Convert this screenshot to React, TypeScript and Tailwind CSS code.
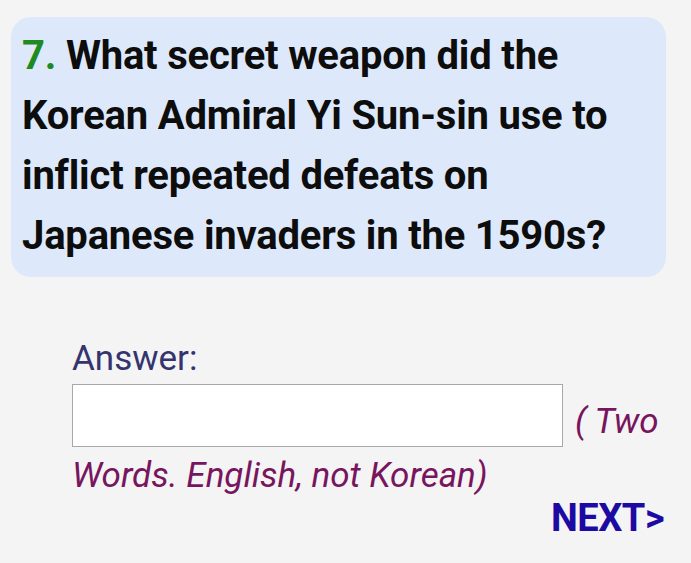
import React from "react";

export default function App() {
  return (
    <div className="w-[691px] h-[563px] bg-[#f4f4f4] overflow-hidden" style={{ fontFamily: "Roboto, 'Liberation Sans', sans-serif" }}>
      <div className="pt-[17px] pl-[11px] pr-[25px]">
        <div className="rounded-[20px] bg-[#dde9fb] pl-[11px] pr-[10px] pt-[9px] pb-[11px]">
          <p className="text-[40px] leading-[60px] font-bold text-[#0d0d0d] tracking-[-0.2px]">
            <span className="text-[#1f8a22]">7.</span> What secret weapon did the Korean Admiral Yi Sun-sin use to inflict repeated defeats on Japanese invaders in the 1590s?
          </p>
        </div>
      </div>
      <div className="pl-[72px] pr-[27px] pt-[62px]">
        <div className="text-[35px] leading-[40px] text-[#34346e]">Answer:</div>
        <div className="mt-[5px] text-[35px] leading-[54px] italic text-[#78155f]">
          <span className="inline-block align-[-14px] w-[491px] h-[63px] bg-white border border-[#a8a8a8] overflow-hidden">
            <input type="text" className="w-full h-full bg-transparent outline-none" aria-label="Answer" />
          </span>
          <span className="ml-[12px]">( Two Words. English, not Korean)</span>
        </div>
        <div className="mt-[-5px] flex justify-end">
          <span className="text-[38px] leading-[40px] font-bold text-[#1c0aa3] tracking-[-0.5px]">NEXT&gt;</span>
        </div>
      </div>
    </div>
  );
}
